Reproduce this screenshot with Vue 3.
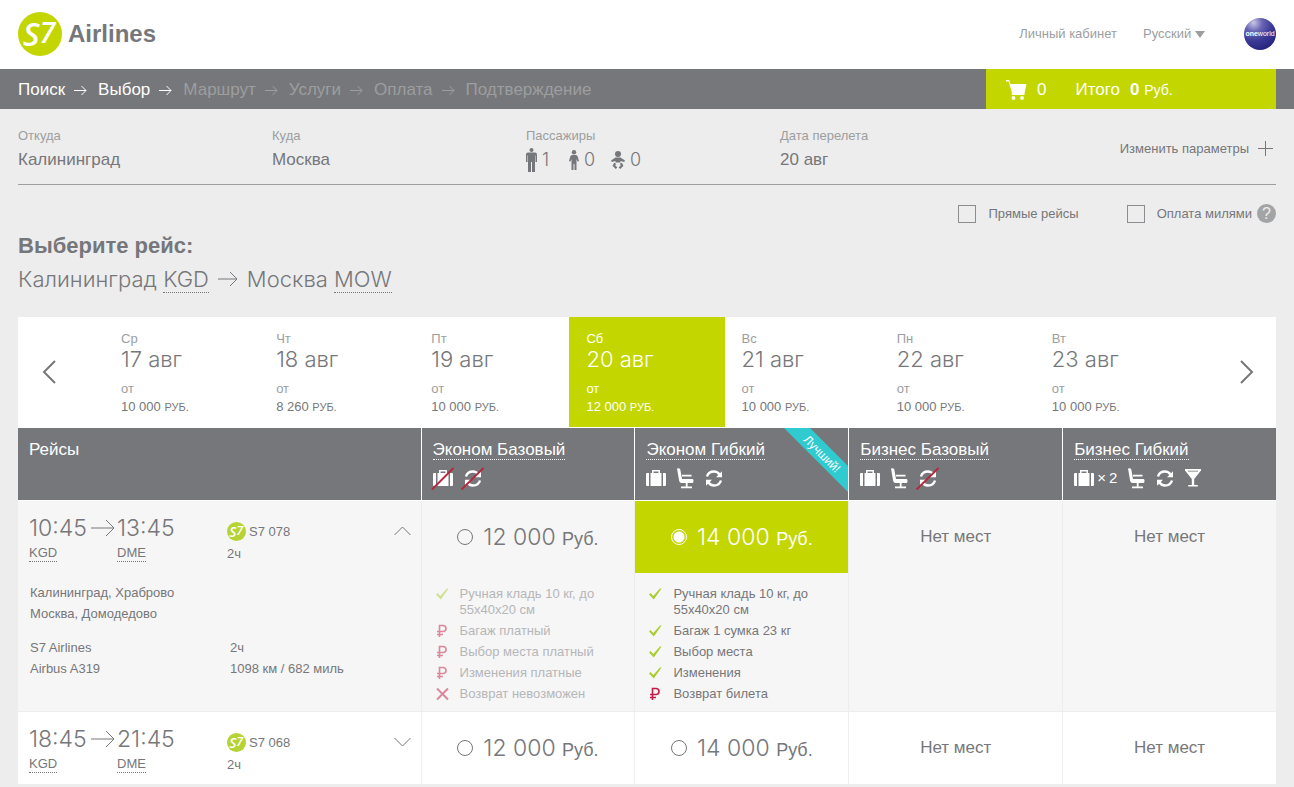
<script setup>
import { ref } from 'vue'

const steps = [
  { name: 'Поиск', active: true },
  { name: 'Выбор', active: true },
  { name: 'Маршрут' },
  { name: 'Услуги' },
  { name: 'Оплата' },
  { name: 'Подтверждение' },
]

const days = [
  { week: 'Ср', date: '17 авг', price: '10 000' },
  { week: 'Чт', date: '18 авг', price: '8 260' },
  { week: 'Пт', date: '19 авг', price: '10 000' },
  { week: 'Сб', date: '20 авг', price: '12 000' },
  { week: 'Вс', date: '21 авг', price: '10 000' },
  { week: 'Пн', date: '22 авг', price: '10 000' },
  { week: 'Вт', date: '23 авг', price: '10 000' },
]
const day = ref(3)

const tariffs = [
  { name: 'Эконом Базовый', perks: [{ icon: 'bag', off: true }, { icon: 'swap', off: true }] },
  { name: 'Эконом Гибкий', best: true, perks: [{ icon: 'bag' }, { icon: 'seat' }, { icon: 'swap' }] },
  { name: 'Бизнес Базовый', perks: [{ icon: 'bag' }, { icon: 'seat' }, { icon: 'swap', off: true }] },
  { name: 'Бизнес Гибкий', perks: [{ icon: 'bag', count: '2' }, { icon: 'seat' }, { icon: 'swap' }, { icon: 'glass' }] },
]

const rules = [
  [
    { icon: 'yes', text: 'Ручная кладь 10 кг, до 55х40х20 см' },
    { icon: 'rub', text: 'Багаж платный' },
    { icon: 'rub', text: 'Выбор места платный' },
    { icon: 'rub', text: 'Изменения платные' },
    { icon: 'no', text: 'Возврат невозможен' },
  ],
  [
    { icon: 'yes', text: 'Ручная кладь 10 кг, до 55х40х20 см' },
    { icon: 'yes', text: 'Багаж 1 сумка 23 кг' },
    { icon: 'yes', text: 'Выбор места' },
    { icon: 'yes', text: 'Изменения' },
    { icon: 'rub', text: 'Возврат билета' },
  ],
  [],
  [],
]

const flights = ref([
  { id: 'S7 078', from: '10:45', to: '13:45', open: true, prices: ['12 000', '14 000', null, null] },
  { id: 'S7 068', from: '18:45', to: '21:45', open: false, prices: ['12 000', '14 000', null, null] },
])
const picked = ref('S7 078-1')
</script>

<template>
  <div class="page">
    <header class="top">
      <a class="brand" href="#" aria-label="S7 Airlines">
        <svg class="brand-mark" viewBox="0 0 44 44" aria-hidden="true">
          <circle cx="22" cy="22" r="22" fill="#c3d600" />
          <text x="5" y="34" class="mark-text">S<tspan y="31" class="mark-seven">7</tspan></text>
        </svg>
        <span class="brand-name">Airlines</span>
      </a>
      <div class="top-links">
        <a class="cabinet" href="#">Личный кабинет</a>
        <label class="lang">
          <select aria-label="Язык"><option>Русский</option></select>
          <svg width="10" height="7" viewBox="0 0 10 7" aria-hidden="true"><path d="M0 0h10L5 7z" fill="#9c9e9f" /></svg>
        </label>
        <svg class="oneworld" width="32" height="32" viewBox="0 0 32 32" role="img" aria-label="oneworld">
          <defs>
            <radialGradient id="globe" cx="0.3" cy="0.15" r="0.9">
              <stop offset="0" stop-color="#c9c6e6" />
              <stop offset="0.3" stop-color="#6a66b4" />
              <stop offset="0.65" stop-color="#3a3896" />
              <stop offset="1" stop-color="#25247c" />
            </radialGradient>
          </defs>
          <circle cx="16" cy="16" r="16" fill="url(#globe)" />
          <text x="16" y="18" text-anchor="middle" class="globe-text"><tspan class="globe-bold">one</tspan>world</text>
        </svg>
      </div>
    </header>

    <nav class="bar">
      <ol class="steps">
        <li v-for="(s, i) in steps" :key="s.name" :class="{ active: s.active }">
          <a href="#">{{ s.name }}</a>
          <svg v-if="i < steps.length - 1" width="13" height="11" viewBox="0 0 13 11" aria-hidden="true">
            <path d="M0 5.500h12M7.500 1l4.500 4.500L7.500 10" fill="none" stroke="currentColor" />
          </svg>
        </li>
      </ol>
      <a class="cart" href="#">
        <svg width="21" height="20" viewBox="0 0 21 20" aria-hidden="true">
          <path d="M0 0h3.200l1.300 4H20.500L18.500 13.500H6.300L2.600 1.600H0z" fill="#fff" />
          <path d="M5.500 13h13v2H6z" fill="#fff" />
          <circle cx="7.500" cy="18" r="1.900" fill="#fff" /><circle cx="16" cy="18" r="1.900" fill="#fff" />
        </svg>
        <span class="cart-count">0</span>
        <span>Итого</span>
        <span class="cart-sum"><b>0</b> <small>Руб.</small></span>
      </a>
    </nav>

    <main class="content">
      <section class="params">
        <div><span class="label">Откуда</span><span class="value">Калининград</span></div>
        <div><span class="label">Куда</span><span class="value">Москва</span></div>
        <div>
          <span class="label">Пассажиры</span>
          <span class="value pax">
            <svg width="11" height="24" viewBox="0 0 11 24" aria-label="Взрослые">
              <circle cx="5.500" cy="2" r="2" fill="#76777a" />
              <path d="M2 4.500h7q2 0 2 2V14H9.500V7.500H9V24H6V14H5v10H2V7.500h-.5V14H0V6.500q0-2 2-2z" fill="#76777a" />
            </svg><span>1</span>
            <svg width="10" height="20" viewBox="0 0 10 20" aria-label="Дети">
              <circle cx="5" cy="2.200" r="2.200" fill="#76777a" />
              <path d="M3 5h4q1.200 0 1.700 1.500L10 11l-1.300.7L7.500 9v11h-2v-6h-1v6h-2V9l-1.200 2.700L0 11l1.300-4.500Q1.800 5 3 5z" fill="#76777a" />
            </svg><span>0</span>
            <svg width="14" height="18" viewBox="0 0 14 18" aria-label="Младенцы">
              <circle cx="7" cy="3" r="3" fill="#76777a" />
              <path d="M4.500 6.500h5L14 9.500l-.8 1.600-3.700-1.200v1.600h-5V9.900L.8 11.100 0 9.500z" fill="#76777a" />
              <path d="M4.200 12.300 2.900 14.500l2.600 2.700M9.800 12.300l1.300 2.200-2.600 2.700" fill="none" stroke="#76777a" stroke-width="2.200" />
            </svg><span>0</span>
          </span>
        </div>
        <div><span class="label">Дата перелета</span><span class="value">20 авг</span></div>
        <button class="edit" type="button">
          Изменить параметры
          <svg width="15" height="15" viewBox="0 0 15 15" aria-hidden="true"><path d="M7.500 0v15M0 7.500h15" stroke="#76777a" /></svg>
        </button>
      </section>

      <section class="filters">
        <label><input type="checkbox" />Прямые рейсы</label>
        <div class="miles">
          <label><input type="checkbox" />Оплата милями</label>
          <button class="help" type="button">?</button>
        </div>
      </section>

      <h1>Выберите рейс:</h1>
      <h2>
        <span>Калининград <abbr>KGD</abbr></span>
        <svg width="20" height="16" viewBox="0 0 20 16" aria-hidden="true"><path d="M0 8h19M12 1l7 7-7 7" fill="none" stroke="#76777a" /></svg>
        <span>Москва <abbr>MOW</abbr></span>
      </h2>

      <section class="calendar">
        <button class="turn" type="button" aria-label="Назад">
          <svg width="14" height="24" viewBox="0 0 14 24"><path d="M13 1 2 12l11 11" fill="none" stroke="#76777a" stroke-width="2" /></svg>
        </button>
        <button v-for="(d, i) in days" :key="d.date" class="day" :class="{ chosen: i === day }" type="button" @click="day = i">
          <span class="week">{{ d.week }}</span>
          <span class="date">{{ d.date }}</span>
          <span class="week">от</span>
          <span class="cost">{{ d.price }} <small>РУБ.</small></span>
        </button>
        <button class="turn" type="button" aria-label="Вперёд">
          <svg width="14" height="24" viewBox="0 0 14 24"><path d="m1 1 11 11L1 23" fill="none" stroke="#76777a" stroke-width="2" /></svg>
        </button>
      </section>

      <table class="flights">
        <colgroup><col /><col v-for="t in tariffs" :key="t.name" class="fare-col" /></colgroup>
        <thead>
          <tr>
            <th scope="col">Рейсы</th>
            <th v-for="t in tariffs" :key="t.name" scope="col">
              <a href="#">{{ t.name }}</a>
              <div class="perks">
                <span v-for="p in t.perks" :key="p.icon" class="perk">
                  <svg v-if="p.icon === 'bag'" width="20" height="22" viewBox="0 0 20 22" aria-label="Багаж">
                    <path d="M0 7q0-1 1-1h2v13H1q-1 0-1-1zM4.500 6h11v13h-11zM17 6h2q1 0 1 1v11q0 1-1 1h-2z" fill="#fff" />
                    <path d="M6.800 6V3.800h6.400V6" fill="none" stroke="#fff" stroke-width="1.500" />
                    <path v-if="p.off" d="M-1 22.500 20.500 1" stroke="#b5273c" stroke-width="1.800" />
                  </svg>
                  <svg v-else-if="p.icon === 'swap'" width="18" height="22" viewBox="0 0 18 22" aria-label="Обмен">
                    <path d="M2 9.500Q3.500 4.500 9 4.500q3.500 0 5.500 3M16 13.500q-1.500 5-7 5-3.500 0-5.500-3" fill="none" stroke="#fff" stroke-width="2.400" />
                    <path d="M17 4.200v6h-6zM1 18.800v-6h6z" fill="#fff" />
                    <path v-if="p.off" d="M-2.500 22.500 19.500 1" stroke="#b5273c" stroke-width="1.800" />
                  </svg>
                  <svg v-else-if="p.icon === 'seat'" width="17" height="22" viewBox="0 0 17 22" aria-label="Место">
                    <path d="M0 1.500Q2.500 .5 3.300 2.500L5 12h10.500q1 0 1 2t-1 2H4.500q-1.800 0-2.300-2z" fill="#fff" />
                    <path d="M5 8.700h9.500M9.700 15v5M4 20.300h11" stroke="#fff" stroke-width="1.800" />
                  </svg>
                  <svg v-else width="16" height="22" viewBox="0 0 16 22" aria-label="Напитки">
                    <path d="M0 2h16v1.500L9.200 12v6h3.600v1.500H3.200V18h3.600v-6L0 3.500z" fill="#fff" />
                    <path d="M3 4.200h10" stroke="#76777a" stroke-width=".8" />
                  </svg>
                  <span v-if="p.count" class="count">×&#8201;{{ p.count }}</span>
                </span>
              </div>
              <svg v-if="t.best" class="ribbon" width="64" height="64" viewBox="0 0 64 64">
                <path d="M0 0h26l38 38v26z" fill="#2fcbd0" />
                <text x="38" y="30" text-anchor="middle" transform="rotate(45 38 26)" class="ribbon-text">Лучший!</text>
              </svg>
            </th>
          </tr>
        </thead>
        <tbody>
          <tr v-for="f in flights" :key="f.id" :class="{ open: f.open }">
            <td>
              <div class="flight">
                <div>
                  <div class="time">{{ f.from }}
                    <svg width="24" height="18" viewBox="0 0 24 18" aria-hidden="true"><path d="M0 9h23M15 1l8 8-8 8" fill="none" stroke="#76777a" /></svg>
                  </div>
                  <abbr>KGD</abbr>
                </div>
                <div>
                  <div class="time">{{ f.to }}</div>
                  <abbr>DME</abbr>
                </div>
                <div class="number">
                  <div class="carrier">
                    <svg width="19" height="19" viewBox="0 0 44 44" aria-hidden="true">
                      <circle cx="22" cy="22" r="22" fill="#b5d334" />
                      <text x="5" y="34" class="mark-text">S<tspan y="31" class="mark-seven">7</tspan></text>
                    </svg>
                    {{ f.id }}
                  </div>
                  <div>2ч</div>
                </div>
                <button class="toggle" type="button" :aria-expanded="f.open" aria-label="Подробности" @click="f.open = !f.open">
                  <svg width="17" height="10" viewBox="0 0 17 10">
                    <path :d="f.open ? 'M.5 9l8-8 8 8' : 'M.5 1l8 8 8-8'" fill="none" stroke="#76777a" />
                  </svg>
                </button>
              </div>
              <div v-if="f.open" class="details">
                <p>Калининград, Храброво<br />Москва, Домодедово</p>
                <div class="plane">
                  <span>S7 Airlines</span><span>2ч</span>
                  <span>Airbus A319</span><span>1098 км / 682 миль</span>
                </div>
              </div>
            </td>
            <td v-for="(p, i) in f.prices" :key="i">
              <label v-if="p" class="price" :class="{ picked: picked === f.id + '-' + i }">
                <input v-model="picked" type="radio" name="fare" :value="f.id + '-' + i" />
                <span class="amount">{{ p }} <small>Руб.</small></span>
              </label>
              <div v-else class="price none">Нет мест</div>
              <ul v-if="f.open && p" class="rules" :class="{ faded: picked !== f.id + '-' + i }">
                <li v-for="r in rules[i]" :key="r.text">
                  <svg width="13" height="16" viewBox="0 0 13 16" aria-hidden="true">
                    <path v-if="r.icon === 'yes'" d="M0 8.500 1.500 7l2.800 3L11 2.500h1.500L4.800 13.500z" fill="#a9cc2f" />
                    <path v-else-if="r.icon === 'rub'" d="M3.500 14V2.500H7q3 0 3 3t-3 3H1M1 11.500h6" fill="none" stroke="#c41c44" stroke-width="1.600" />
                    <path v-else d="m1 2.500 11 11m0-11-11 11" stroke="#c41c44" stroke-width="2" />
                  </svg>
                  <span>{{ r.text }}</span>
                </li>
              </ul>
            </td>
          </tr>
        </tbody>
      </table>
    </main>
  </div>
</template>

<style>
body {
  background: #ededed;
}
</style>

<style scoped>
.page {
  font: 13px/16px "Liberation Sans", Arial, sans-serif;
  color: #76777a;
}
.page * {
  box-sizing: border-box;
}
svg {
  display: block;
  flex: none;
  overflow: visible;
}
a {
  color: inherit;
  text-decoration: none;
}
button {
  font: inherit;
  color: inherit;
  background: none;
  border: 0;
  padding: 0;
  text-align: left;
  cursor: pointer;
}
.top {
  display: flex;
  justify-content: space-between;
  align-items: center;
  height: 69px;
  padding: 0 18px 1px;
  background: #fff;
}
.brand {
  display: flex;
  align-items: center;
  gap: 6px;
}
.brand-mark {
  width: 44px;
  height: 44px;
}
.mark-text {
  font: italic 600 32px "Open Sans", "Noto Sans", sans-serif;
  fill: #fff;
}
.mark-seven {
  font-size: 29px;
}
.brand-name {
  font-size: 24px;
  font-weight: bold;
  line-height: 28px;
}
.top-links {
  display: flex;
  align-items: center;
  color: #9c9e9f;
}
.cabinet {
  margin-right: 26px;
}
.lang {
  display: flex;
  align-items: center;
  gap: 3px;
  margin-right: 39px;
}
.lang select {
  appearance: none;
  border: 0;
  padding: 0;
  background: none;
  font: inherit;
  color: inherit;
}
.globe-text {
  font: 7px "Liberation Sans", Arial, sans-serif;
  fill: #fff;
}
.globe-bold {
  font-weight: bold;
}
.bar {
  display: flex;
  justify-content: space-between;
  align-items: stretch;
  height: 40px;
  padding: 0 18px;
  background: #76777a;
  color: #9c9e9f;
  font-size: 17px;
}
.steps {
  display: flex;
  align-items: center;
  gap: 11px;
  margin: 0;
  padding: 2px 0 0;
  list-style: none;
}
.steps li {
  display: flex;
  align-items: center;
  gap: 9px;
}
.steps .active {
  color: #fff;
}
.cart {
  display: flex;
  align-items: center;
  width: 290px;
  padding: 2px 20px 0;
  background: #c3d600;
  color: #fff;
}
.cart-count {
  margin: 0 29px 0 10px;
}
.cart-sum {
  margin-left: 10px;
}
small {
  font-size: 14px;
}
.content {
  padding: 0 18px 3px;
}
.params {
  display: grid;
  grid-template-columns: repeat(4, 254fr) 242fr;
  height: 76px;
  padding-top: 19px;
  border-bottom: 1px solid #9c9e9f;
}
.label {
  display: block;
  color: #9c9e9f;
}
.value {
  display: flex;
  height: 32px;
  align-items: center;
  font-size: 17px;
}
.pax svg {
  margin-right: 5px;
}
.pax span {
  min-width: 12px;
  margin-right: 15px;
  font: 300 18px/20px Inter, "Liberation Sans", sans-serif;
}
.edit {
  display: flex;
  justify-content: flex-end;
  align-items: center;
  gap: 9px;
  height: 41px;
  padding-right: 3px;
}
.filters {
  display: flex;
  justify-content: flex-end;
  gap: 48px;
  height: 45px;
  padding-top: 19px;
}
.filters label {
  display: flex;
  align-items: center;
  gap: 12px;
  height: 20px;
}
.filters input {
  appearance: none;
  width: 18px;
  height: 18px;
  margin: 0;
  border: 1px solid #8c8d90;
}
.filters input:checked {
  background: #c3d600;
}
.miles {
  display: flex;
  gap: 5px;
}
.help {
  width: 19px;
  height: 19px;
  border-radius: 50%;
  background: #a3a4a5;
  color: #ededed;
  font-size: 16px;
  text-align: center;
}
h1 {
  margin: 0;
  font-size: 22px;
  line-height: 32px;
}
h2 {
  display: flex;
  align-items: center;
  gap: 9px;
  margin: 3px 0 24px;
  font: 300 22px/28px Inter, "Liberation Sans", sans-serif;
}
abbr {
  border-bottom: 1px dotted #76777a;
}
h2 abbr {
  display: inline-block;
  line-height: 26px;
}
.calendar {
  display: grid;
  grid-template-columns: 86px repeat(7, 1fr) 86px;
  height: 111px;
  padding-bottom: 1px;
  background: #fff;
}
.turn {
  display: flex;
  align-items: center;
  padding-left: 24px;
}
.turn:last-child {
  justify-content: flex-end;
  padding: 0 22px 0 0;
}
.day {
  display: flex;
  flex-direction: column;
  padding: 14px 17px 0;
}
.week {
  color: #9c9e9f;
}
.time,
.amount {
  font: 300 23px/28px Inter, "Liberation Sans", sans-serif;
}
.date {
  margin-bottom: 10px;
  font: 300 22px/24px Inter, "Liberation Sans", sans-serif;
}
.cost {
  margin-top: 2px;
}
.cost small {
  font-size: 11px;
}
.chosen {
  background: #c3d600;
}
.chosen span {
  color: #fff;
}
.flights {
  width: 100%;
  border-collapse: separate;
  border-spacing: 0;
  table-layout: fixed;
  background: #fff;
}
.fare-col {
  width: 17%;
}
th {
  position: relative;
  height: 73px;
  padding: 12px 11px 0;
  background: #76777a;
  border-bottom: 1px solid #fff;
  color: #fff;
  font-size: 17px;
  line-height: 20px;
  font-weight: normal;
  text-align: left;
  vertical-align: top;
}
th + th {
  border-left: 1px solid #fff;
}
th a {
  display: inline-block;
  line-height: 18px;
  border-bottom: 1px dotted #fff;
}
.perks {
  display: flex;
  gap: 11px;
  margin-top: 7px;
}
.perk {
  display: flex;
  align-items: center;
  gap: 3px;
}
.count {
  font-size: 15px;
}
.ribbon {
  position: absolute;
  top: 0;
  right: 0;
}
.ribbon-text {
  font: 12px "Liberation Sans", Arial, sans-serif;
  fill: #fff;
}
td {
  padding: 0;
  vertical-align: top;
  border-bottom: 1px solid #ededed;
}
tr:last-child td {
  border-bottom: 0;
}
td + td {
  border-left: 1px solid #ededed;
}
.open td {
  background: #f6f6f6;
}
.flight {
  display: grid;
  grid-template-columns: 88px 110px 1fr auto;
  padding: 13px 10px 0 11px;
  height: 72px;
}
.time {
  display: flex;
  gap: 4px;
  align-items: center;
}
.flight abbr {
  display: inline-block;
  margin-top: 2px;
  line-height: 17px;
}
.carrier {
  display: flex;
  align-items: center;
  gap: 3px;
  margin: 8px 0 5px;
  height: 19px;
}
.toggle {
  align-self: start;
  margin-top: 12px;
}
.details {
  padding: 9px 10px 9px 12px;
  line-height: 21px;
}
.details p {
  margin: 0 0 13px;
}
.plane {
  display: grid;
  grid-template-columns: 200px 1fr;
}
.price {
  display: flex;
  align-items: center;
  justify-content: center;
  gap: 10px;
  height: 72px;
}
.price.picked {
  background: #c3d600;
  color: #fff;
}
.price.none {
  font-size: 17px;
}
.price input {
  appearance: none;
  width: 16px;
  height: 16px;
  margin: 0;
  border: 1px solid #76777a;
  border-radius: 50%;
}
.price input:checked {
  border-color: #fff;
  background: radial-gradient(circle, #fff 5px, transparent 6px);
}
.amount small {
  font: 18px "Liberation Sans", Arial, sans-serif;
}
.rules {
  display: flex;
  flex-direction: column;
  gap: 5px;
  margin: 0;
  padding: 13px 36px 9px 14px;
  list-style: none;
}
.rules li {
  display: flex;
  gap: 11px;
}
.faded {
  opacity: 0.5;
}
</style>
